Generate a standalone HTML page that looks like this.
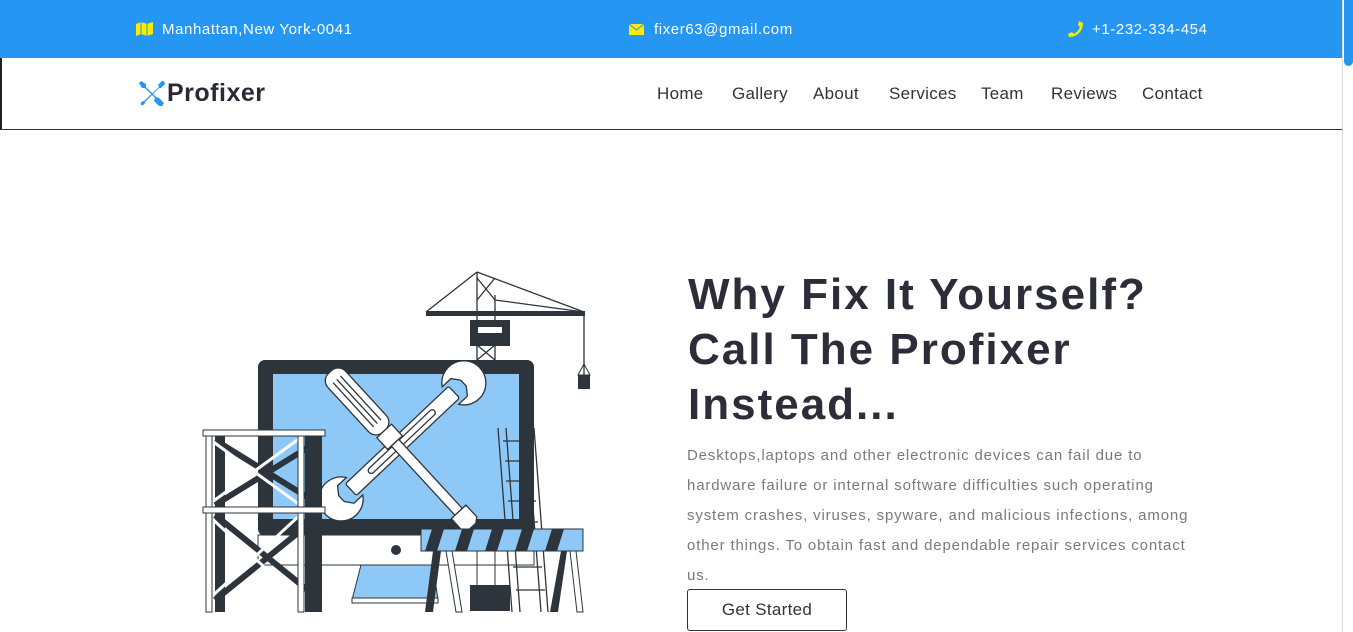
<!DOCTYPE html>
<html><head><meta charset="utf-8">
<style>
*{margin:0;padding:0;box-sizing:border-box}
body{width:1353px;height:632px;overflow:hidden;background:#fff;font-family:"Liberation Sans",sans-serif;position:relative}
.top{position:absolute;left:0;top:0;width:1342px;height:58px;background:#2597f2;color:#fff;font-size:15px;letter-spacing:0.6px}
.top span{position:absolute;top:21px}
.nav{position:absolute;left:0;top:58px;width:1342px;height:72px;border-bottom:1px solid #333;border-left:2px solid #222}
.nav a{position:absolute;top:26px;font-size:17px;color:#333;text-decoration:none;letter-spacing:0.3px}
.logo{position:absolute;left:165px;top:21px;font-size:25px;font-weight:bold;color:#2a2a36;letter-spacing:0.5px}
.sb{position:absolute;right:0;top:0;width:11px;height:632px;background:#fff;border-left:1px solid #ddd}
.sb i{position:absolute;left:1px;top:0;width:9px;height:66px;background:#2597f2;border-radius:0 0 5px 5px}
h1{position:absolute;left:688px;top:267px;font-size:44px;line-height:55px;color:#2d2d3a;font-weight:bold;letter-spacing:2px;width:620px}
p{position:absolute;left:687px;top:441px;width:560px;font-size:15px;line-height:30px;color:#7a7a7a;letter-spacing:0.85px;white-space:nowrap}
.btn{position:absolute;left:687px;top:589px;width:160px;height:42px;border:1px solid #333;border-radius:3px;font-size:17px;color:#333;text-align:center;line-height:40px;letter-spacing:0.3px}
</style></head><body>
<div class="top">
<svg style="position:absolute;left:136px;top:22px" width="17" height="14"><path d="M0 2L5 0L11 2L17 0V12L11 14L5 12L0 14Z" fill="#ffeb00"/><path d="M5 0V12M11 2V14" stroke="#2597f2" stroke-width="1"/></svg>
<span style="left:162px">Manhattan,New York-0041</span>
<svg style="position:absolute;left:629px;top:24px" width="15" height="11"><rect width="15" height="11" fill="#ffeb00"/><path d="M0 0L7.5 6L15 0" stroke="#2597f2" fill="none"/></svg>
<span style="left:654px">fixer63@gmail.com</span>
<svg style="position:absolute;left:1068px;top:21px" width="15" height="16"><path d="M11 0L15 2C15 10 9 16 1 16L0 13L4 11L6 13C9 11 11 9 12 6L10 4Z" fill="#ffeb00"/></svg>
<span style="left:1092px">+1-232-334-454</span>
</div>
<div class="nav">
<svg style="position:absolute;left:136px;top:22px" width="28" height="27" viewBox="0 0 28 27"><path d="M3 1L1 3L4 8L7 8L17 18L16 21L21 26L24 26L26 23L21 18L18 17L8 7L8 4Z" fill="#2597f2"/><path d="M24 1L20 5L21 7L6 21C4 21 2 23 3 25C5 26 7 24 7 22L21 8L23 8L27 4C26 1 25 0 24 1Z" fill="#2597f2"/></svg>
<div class="logo">Profixer</div>
<a style="left:655px">Home</a><a style="left:730px">Gallery</a><a style="left:811px">About</a><a style="left:887px">Services</a><a style="left:979px">Team</a><a style="left:1049px">Reviews</a><a style="left:1140px">Contact</a>
</div>
<div class="sb"><i></i></div>
<svg style="position:absolute;left:0;top:0" width="1342" height="632">
<g stroke="#2d343b" fill="none" stroke-width="1.3">
<path d="M477 272V360M495 295V360M477 272L426 312M477 272L584 312M495 300L584 312M584 316V377"/>
<path d="M477 278L495 300M495 278L477 300M477 345L495 360M495 345L477 360"/>
</g>
<rect x="426" y="311" width="159" height="5" fill="#2d343b"/>
<rect x="470" y="320" width="40" height="26" fill="#2d343b"/><rect x="478" y="327" width="24" height="6" fill="#fff"/>
<path d="M584 364L578 375H590Z" fill="none" stroke="#2d343b"/><rect x="578" y="375" width="12" height="14" fill="#2d343b"/>
<rect x="258" y="360" width="276" height="176" rx="7" fill="#2d343b"/>
<rect x="273" y="374" width="246" height="145" fill="#8ec8f6"/>
<rect x="258" y="535" width="276" height="30" fill="#fff" stroke="#2d343b"/>
<circle cx="396" cy="550" r="5" fill="#2d343b"/>
<path d="M361 565H433L438 600H352Z" fill="#8ec8f6" stroke="#2d343b"/>
<rect x="352" y="598" width="86" height="5" fill="#fff" stroke="#2d343b"/>
<g transform="translate(340,500) rotate(-43.4)" fill="#fff" stroke="#2d343b" stroke-width="1.3">
<rect x="15" y="-8" width="142" height="16" rx="2"/>
<rect x="40" y="-3" width="90" height="6" rx="3" fill="none"/>
<path d="M20 -12A22 22 0 1 0 20 12L8 12L2 4L2 -4L8 -12Z"/>
<path d="M152 -12A22 22 0 1 1 152 12L164 12L170 4L170 -4L164 -12Z"/>
</g>
<g transform="translate(330,372) rotate(47.4)" fill="#fff" stroke="#2d343b" stroke-width="1.3">
<rect x="0" y="-12" width="80" height="24" rx="10"/>
<path d="M10 -5H70M10 0H70M10 5H70" fill="none"/>
<rect x="80" y="-10" width="16" height="20"/>
<rect x="96" y="-5" width="94" height="10"/>
<path d="M190 -10H206L210 -5V5L206 10H190Z"/>
</g>
<g fill="#2d343b"><rect x="215" y="435" width="10" height="177"/><rect x="305" y="435" width="17" height="177"/></g>
<g stroke="#2d343b" stroke-width="6"><path d="M215 440L320 505M320 440L215 505M215 515L320 600M320 515L215 600"/></g>
<g stroke="#fff" stroke-width="3"><path d="M208 438L300 505M300 438L208 505M208 515L300 600M300 515L208 600"/></g>
<g fill="#fff" stroke="#2d343b"><rect x="206" y="435" width="6" height="177"/><rect x="298" y="435" width="6" height="177"/><rect x="203" y="430" width="122" height="6"/><rect x="203" y="507" width="122" height="6"/></g>
<g stroke="#2d343b" fill="none" stroke-width="1.3"><path d="M498 428L512 612M506 428L520 612M527 428L541 612M534 428L548 612"/>
<path d="M503 441H530M505 461H532M506 481H534M508 501H536M510 522H538M513 567H542M516 590H545"/></g>
<rect x="421" y="529" width="162" height="22" fill="#8ec8f6" stroke="#2d343b"/>
<g fill="#2d343b"><path d="M432 529H444L437 551H425Z"/><path d="M462 529H474L467 551H455Z"/><path d="M492 529H504L497 551H485Z"/><path d="M522 529H534L527 551H515Z"/><path d="M552 529H564L557 551H545Z"/></g>
<path d="M433 551L441 551L433 612L425 612Z" fill="#2d343b"/><path d="M446 551H452L462 612H456Z" fill="#fff" stroke="#2d343b"/>
<path d="M561 551H567L558 612H550Z" fill="#2d343b"/><path d="M570 551H576L583 612H577Z" fill="#fff" stroke="#2d343b"/>
<path d="M477 551V585M495 551V585" stroke="#2d343b"/><rect x="470" y="585" width="40" height="26" fill="#2d343b"/>
</svg>
<h1>Why Fix It Yourself?<br>Call The Profixer<br>Instead...</h1>
<p>Desktops,laptops and other electronic devices can fail due to<br>hardware failure or internal software difficulties such operating<br>system crashes, viruses, spyware, and malicious infections, among<br>other things. To obtain fast and dependable repair services contact<br>us.</p>
<div class="btn">Get Started</div>
</body></html>
